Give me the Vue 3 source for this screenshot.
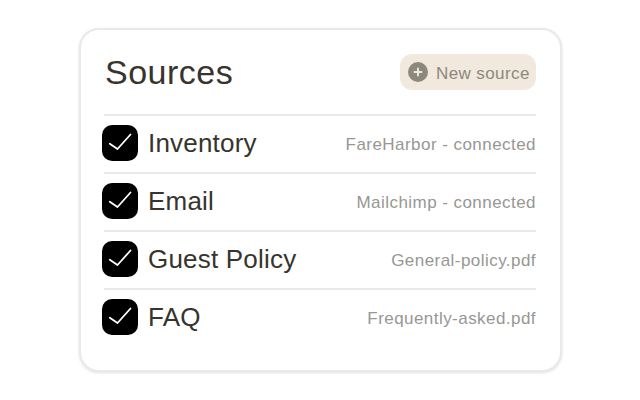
<script setup>
const rows = [
  { name: 'Inventory', source: 'FareHarbor - connected' },
  { name: 'Email', source: 'Mailchimp - connected' },
  { name: 'Guest Policy', source: 'General-policy.pdf' },
  { name: 'FAQ', source: 'Frequently-asked.pdf' },
]
</script>

<template>
  <div class="page">
    <section class="card">
      <header class="head">
        <h1 class="title">Sources</h1>
        <div class="btn">
          <svg class="plus" width="20" height="20" viewBox="0 0 20 20">
            <circle cx="10" cy="10" r="10" fill="#8c887b" />
            <path d="M10 6.5v7M6.5 10h7" stroke="#f1e9dd" stroke-width="2" stroke-linecap="round" />
          </svg>
          <span class="btn-label">New source</span>
        </div>
      </header>
      <ul class="list">
        <li v-for="r in rows" :key="r.name" class="row">
          <span class="check">
            <svg width="36" height="36" viewBox="0 0 36 36">
              <path d="M7.8 18.8L15.5 24L28.5 9.5" fill="none" stroke="#fff" stroke-width="1.8" stroke-linecap="round" stroke-linejoin="round" />
            </svg>
          </span>
          <span class="name">{{ r.name }}</span>
          <span class="src">{{ r.source }}</span>
        </li>
      </ul>
    </section>
  </div>
</template>

<style>
html, body { margin: 0; background: #fff; }
</style>

<style scoped>
.page {
  width: 640px;
  height: 400px;
  padding: 28px 0 0 79px;
  box-sizing: border-box;
  font-family: "Liberation Sans", Arial, sans-serif;
}
.card {
  width: 483px;
  height: 344px;
  box-sizing: border-box;
  border: 2px solid #e9e9e7;
  border-radius: 20px;
  background: #fff;
  box-shadow: 0 1px 3px rgba(0, 0, 0, 0.12);
  padding: 24px 24px 0 23px;
}
.head {
  display: flex;
  justify-content: space-between;
  align-items: center;
  height: 36px;
  margin-bottom: 24px;
}
.title {
  margin: 0;
  padding-left: 1px;
  font-size: 34px;
  font-weight: 400;
  letter-spacing: 0.5px;
  color: #37342e;
}
.btn {
  display: flex;
  align-items: center;
  gap: 8px;
  height: 36px;
  box-sizing: border-box;
  width: 136px;
  padding-left: 8px;
  border-radius: 12px;
  background: #f1e9dd;
  color: #8c887b;
  font-size: 17px;
  letter-spacing: 0.4px;
}
.btn-label {
  padding-top: 3px;
}
.list {
  list-style: none;
  margin: 0;
  padding: 0;
}
.row {
  display: flex;
  align-items: center;
  height: 58px;
  box-sizing: border-box;
  border-top: 2px solid #e9e9e7;
  padding-bottom: 2px;
}
.check {
  width: 36px;
  height: 36px;
  margin-left: -2px;
  margin-right: 10px;
  border-radius: 10px;
  background: #000;
  display: block;
}
.check svg { display: block; }
.name {
  font-size: 26px;
  letter-spacing: 0.2px;
  color: #37342e;
}
.src {
  margin-left: auto;
  padding-top: 3px;
  font-size: 17px;
  letter-spacing: 0.45px;
  color: #979794;
}
</style>
